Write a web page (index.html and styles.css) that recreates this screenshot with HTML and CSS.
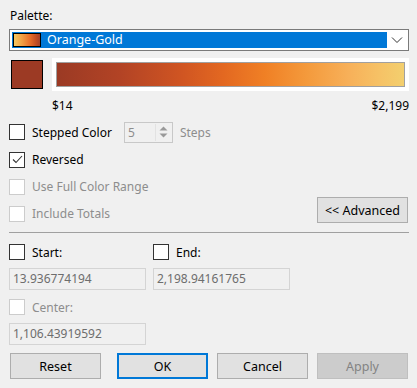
FILE: index.html
```html
<!DOCTYPE html>
<html>
<head>
<meta charset="utf-8">
<link rel="stylesheet" href="styles.css">
</head>
<body>
<div class="dialog">
  <div class="label palette-label">Palette:</div>
  <div class="combo">
    <div class="combo-sel">
      <span class="mini-swatch"></span>
      <span class="combo-text">Orange-Gold</span>
    </div>
    <div class="combo-arrow">
      <svg width="12" height="8" viewBox="0 0 12 8"><path d="M1 1.5 L6 6.5 L11 1.5" fill="none" stroke="#333" stroke-width="1"/></svg>
    </div>
  </div>

  <div class="ramp-row">
    <div class="color-swatch"></div>
    <div class="ramp-frame"><div class="ramp"></div></div>
  </div>
  <div class="range-labels">
    <span>$14</span><span>$2,199</span>
  </div>

  <div class="row stepped">
    <label class="check"><span class="box"></span><span>Stepped Color</span></label>
    <div class="spinner">
      <span class="spin-val">5</span>
      <span class="spin-btns">
        <svg width="9" height="5" viewBox="0 0 9 5"><path d="M0.5 4.5 L4.5 0.5 L8.5 4.5 Z" fill="#999"/></svg>
        <svg width="9" height="5" viewBox="0 0 9 5"><path d="M0.5 0.5 L4.5 4.5 L8.5 0.5 Z" fill="#999"/></svg>
      </span>
    </div>
    <span class="muted">Steps</span>
  </div>

  <div class="row reversed">
    <label class="check"><span class="box"><svg width="13" height="13" viewBox="0 0 13 13"><path d="M2 6.5 L5 9.5 L11 3" fill="none" stroke="#333" stroke-width="1.1"/></svg></span><span>Reversed</span></label>
  </div>
  <div class="row">
    <label class="check disabled"><span class="box"></span><span>Use Full Color Range</span></label>
  </div>
  <div class="row totals-row">
    <label class="check disabled"><span class="box"></span><span>Include Totals</span></label>
    <button class="btn advanced">&lt;&lt; Advanced</button>
  </div>

  <div class="separator"></div>

  <div class="grid2">
    <div class="col">
      <label class="check"><span class="box"></span><span>Start:</span></label>
      <div class="field">13.936774194</div>
    </div>
    <div class="col">
      <label class="check"><span class="box"></span><span>End:</span></label>
      <div class="field">2,198.94161765</div>
    </div>
    <div class="col">
      <label class="check disabled"><span class="box"></span><span>Center:</span></label>
      <div class="field">1,106.43919592</div>
    </div>
  </div>

  <div class="buttons">
    <button class="btn">Reset</button>
    <button class="btn default">OK</button>
    <button class="btn">Cancel</button>
    <button class="btn disabled-btn">Apply</button>
  </div>
</div>
</body>
</html>
```

FILE: styles.css
```css
html, body {
  margin: 0;
  padding: 0;
  background: #f0f0f0;
}
body {
  font-family: "Noto Sans", "Open Sans", sans-serif;
  font-size: 12px;
  color: #000;
}
.dialog {
  width: 400px;
  padding: 0 8px 0 9px;
}
.palette-label {
  height: 29px;
  line-height: 31px;
  padding-left: 1px;
}
.combo {
  height: 22px;
  box-sizing: border-box;
  border: 1px solid #7a7a7a;
  background: #fff;
  display: flex;
  align-items: center;
  padding: 2px;
}
.combo-sel {
  flex: 1;
  height: 16px;
  background: #0078d7;
  display: flex;
  align-items: center;
  padding-left: 1px;
}
.mini-swatch {
  width: 26px;
  height: 12px;
  border: 1px solid #000;
  background: linear-gradient(to right, #f6c861, #f2a044 30%, #e9702b 60%, #c24d24 85%, #a3402a);
  margin-right: 6px;
}
.combo-text {
  color: #fff;
  font-size: 12.5px;
  line-height: 16px;
}
.combo-arrow {
  width: 18px;
  display: flex;
  justify-content: center;
  align-items: center;
  padding-left: 1px;
}
.ramp-row {
  display: flex;
  align-items: center;
  margin-top: 7px;
  height: 33px;
}
.color-swatch {
  width: 30px;
  height: 27px;
  border: 1px solid #000;
  background: #9c3a24;
  margin-left: 2px;
  margin-right: 9px;
}
.ramp-frame {
  flex: 1;
  height: 33px;
  background: #fff;
  box-sizing: border-box;
  padding: 4px;
}
.ramp {
  height: 100%;
  box-sizing: border-box;
  border: 1px solid #a0a0a0;
  background: linear-gradient(to right, #9b3a24 0%, #b24325 18%, #d05522 36%, #e36821 48%, #f08025 60%, #f49a3c 72%, #f7b059 84%, #f6c266 93%, #f3cf6e 100%);
}
.range-labels {
  display: flex;
  justify-content: space-between;
  margin-left: 43px;
  margin-top: 4px;
  height: 20px;
  line-height: 21px;
}
.row {
  display: flex;
  align-items: center;
  height: 27px;
}
.stepped {
  margin-top: 5px;
  height: 24px;
}
.reversed {
  margin-top: 2px;
}
.check {
  display: flex;
  align-items: center;
  gap: 7px;
}
.box {
  width: 14px;
  height: 14px;
  border: 1px solid #333;
  background: #fff;
  display: flex;
  align-items: center;
  justify-content: center;
}
.check.disabled {
  color: #8d8d8d;
}
.check.disabled .box {
  border-color: #cccccc;
}
.spinner {
  margin-left: 12px;
  width: 47px;
  height: 19px;
  border: 1px solid #c8c8c8;
  display: flex;
  align-items: center;
  justify-content: space-between;
  color: #8d8d8d;
}
.spin-val {
  padding-left: 3px;
}
.spin-btns {
  width: 15px;
  height: 17px;
  display: flex;
  flex-direction: column;
  justify-content: center;
  align-items: center;
  gap: 2px;
  border-left: 1px solid #e2e2e2;
  margin-right: 1px;
}
.muted {
  color: #8d8d8d;
  margin-left: 7px;
}
.totals-row {
  justify-content: space-between;
}
.btn {
  font-family: inherit;
  font-size: 12.5px;
  color: #000;
  background: #e1e1e1;
  border: 1px solid #adadad;
  height: 26px;
  padding: 0;
  margin: 0;
  flex-shrink: 0;
}
.advanced {
  width: 91px;
  align-self: flex-start;
  margin-top: -3px;
  margin-right: 1px;
}
.separator {
  height: 1px;
  background: #a0a0a0;
  margin-top: 5px;
}
.grid2 {
  display: grid;
  grid-template-columns: 144px 144px;
  margin-top: 11px;
}
.grid2 .check {
  height: 16px;
}
.field {
  width: 137px;
  height: 22px;
  box-sizing: border-box;
  border: 1px solid #d4d4d4;
  margin-top: 8px;
  margin-bottom: 9px;
  padding-left: 3px;
  line-height: 20px;
  color: #6d6d6d;
  background: #f0f0f0;
}
.buttons {
  display: flex;
  gap: 9px;
  margin-top: -1px;
  padding-left: 1px;
}
.buttons .btn {
  width: 91px;
}
.buttons .default {
  border: 2px solid #0078d7;
  margin-left: 7px;
}
.disabled-btn {
  background: #cccccc;
  border-color: #bfbfbf;
  color: #838383;
}
```
